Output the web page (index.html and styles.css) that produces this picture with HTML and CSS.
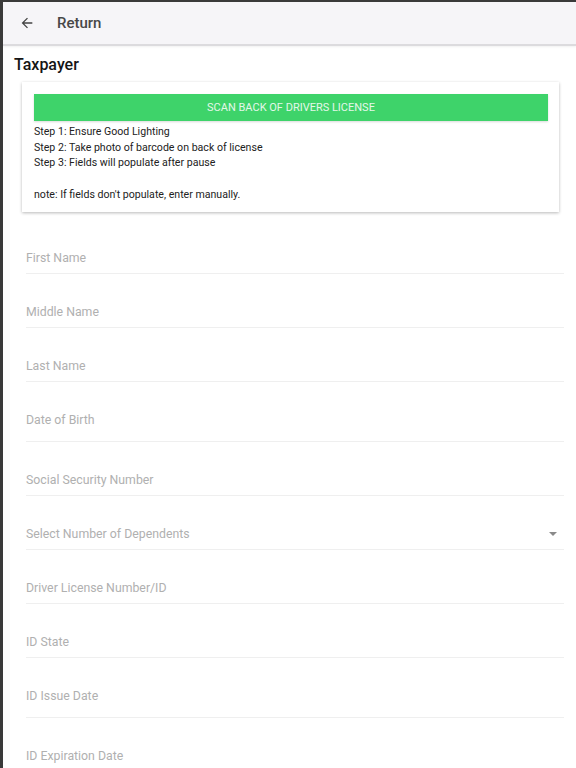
FILE: index.html
```html
<!DOCTYPE html>
<html>
<head>
<meta charset="utf-8">
<link rel="stylesheet" href="styles.css">
</head>
<body>
<div class="screen">
  <header class="topbar">
    <svg class="back" width="16" height="16" viewBox="0 0 24 24"><path d="M20 11H7.83l5.59-5.59L12 4l-8 8 8 8 1.41-1.41L7.83 13H20v-2z" fill="#444"/></svg>
    <span class="title">Return</span>
  </header>
  <main class="content">
    <h1 class="section">Taxpayer</h1>
    <div class="card">
      <div class="scan-btn">SCAN BACK OF DRIVERS LICENSE</div>
      <div class="steps">
        <div>Step 1: Ensure Good Lighting</div>
        <div>Step 2: Take photo of barcode on back of license</div>
        <div>Step 3: Fields will populate after pause</div>
        <div class="note">note: If fields don't populate, enter manually.</div>
      </div>
    </div>
    <div class="fields">
      <div class="field"><span class="label">First Name</span></div>
      <div class="field"><span class="label">Middle Name</span></div>
      <div class="field"><span class="label">Last Name</span></div>
      <div class="field tall"><span class="label">Date of Birth</span></div>
      <div class="field"><span class="label">Social Security Number</span></div>
      <div class="field select"><span class="label">Select Number of Dependents</span><span class="caret"></span></div>
      <div class="field"><span class="label">Driver License Number/ID</span></div>
      <div class="field"><span class="label">ID State</span></div>
      <div class="field tall"><span class="label">ID Issue Date</span></div>
      <div class="field"><span class="label">ID Expiration Date</span></div>
    </div>
  </main>
</div>
</body>
</html>
```
FILE: styles.css
```css
html, body {
  margin: 0;
  padding: 0;
  background: #3a3a3a;
  height: 768px;
  overflow: hidden;
}
.screen {
  margin-left: 3px;
  margin-top: 2px;
  background: #fff;
  height: 766px;
  font-family: Roboto, "Noto Sans", sans-serif;
  overflow: hidden;
}
.topbar {
  height: 42px;
  background: #f6f5f8;
  border-bottom: 2px solid #dcdbde;
  box-shadow: 0 1px 2px rgba(0,0,0,0.06);
  display: flex;
  align-items: center;
  padding-left: 16px;
}
.back {
  display: block;
}
.title {
  margin-left: 22px;
  font-size: 15px;
  color: #484848;
  font-weight: 500;
}
.content {
  padding: 0;
}
.section {
  margin: 0;
  padding: 8px 0 0 11px;
  font-size: 16px;
  line-height: 22px;
  font-weight: 500;
  color: #151515;
}
.card {
  margin: 6px 17px 0 19px;
  padding: 12px 11px 10px 12px;
  background: #fff;
  box-shadow: 0 1px 3px rgba(0,0,0,0.28);
}
.scan-btn {
  height: 27px;
  background: #3ed36a;
  color: #e4f7e9;
  font-size: 11px;
  display: flex;
  align-items: center;
  justify-content: center;
  box-shadow: 0 1px 2px rgba(0,0,0,0.15);
}
.steps {
  padding-top: 3px;
  font-size: 10.6px;
  line-height: 15.5px;
  color: #222;
}
.note {
  margin-top: 16px;
}
.fields {
  margin-top: 8px;
  padding-left: 23px;
  padding-right: 12px;
}
.field {
  padding-top: 30px;
  padding-bottom: 7px;
  border-bottom: 1px solid #efefef;
  display: flex;
  align-items: center;
  position: relative;
}
.field.tall {
  padding-bottom: 13px;
}
.label {
  font-size: 12.3px;
  line-height: 16px;
  color: #b0b0b0;
}
.caret {
  margin-left: auto;
  margin-right: 7px;
  width: 0;
  height: 0;
  border-left: 4px solid transparent;
  border-right: 4px solid transparent;
  border-top: 4px solid #8a8a8a;
}
```
